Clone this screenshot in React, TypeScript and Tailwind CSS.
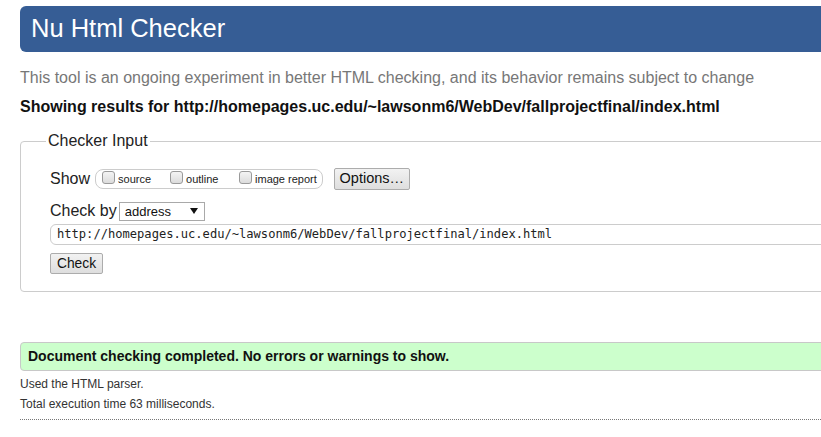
import React from "react";

function Box({ label, w }: { label: string; w: string }) {
  return (
    <div className={`flex items-start shrink-0 ${w}`}>
      <span className="shrink-0 mt-[1px] block w-[13px] h-[13px] rounded-[3px] border border-[#9a9a9a] bg-gradient-to-b from-[#f4f4f4] to-[#dcdcdc]" />
      <span className="ml-[3px] mt-[3px] text-[11px] leading-[13px] text-[#222] whitespace-nowrap">{label}</span>
    </div>
  );
}

export default function App() {
  return (
    <div className="w-full h-[437px] overflow-hidden bg-white font-['Liberation_Sans',Arial,sans-serif] text-[#222]">
      <div className="w-[calc(100%+20px)] pl-[20px] pt-[6px]">
        <div className="h-[46px] bg-[#365d95] rounded-l-[6px] flex items-center pl-[11px]">
          <h1 className="text-white text-[25.5px] leading-none">Nu Html Checker</h1>
        </div>
        <p className="mt-[16px] text-[16px] leading-[20px] text-[#777] whitespace-nowrap">
          This tool is an ongoing experiment in better HTML checking, and its behavior remains subject to change
        </p>
        <p className="mt-[9px] text-[16px] leading-[20px] font-bold text-[#111] whitespace-nowrap">
          Showing results for http://homepages.uc.edu/~lawsonm6/WebDev/fallprojectfinal/index.html
        </p>
        <fieldset className="mt-[14px] border border-[#cccccc] rounded-[4px] pl-[29px] pr-0 pb-[16px]">
          <legend className="-ml-[4px] px-[2px] text-[16px] leading-[20px] text-[#222]">Checker Input</legend>
          <div className="mt-[17px] flex items-center h-[21px]">
            <span className="text-[16px] leading-[20px]">Show</span>
            <div className="ml-[5px] h-[20px] border border-[#cccccc] rounded-[8px] flex items-start pl-[6px] pr-[5px] pt-0">
              <Box label="source" w="w-[68px]" />
              <Box label="outline" w="w-[69px]" />
              <Box label="image report" w="w-auto" />
            </div>
            <button className="ml-[11px] h-[22px] w-[76px] border border-[#acacac] rounded-[2px] bg-gradient-to-b from-[#f2f2f2] to-[#dedede] text-[14.5px] leading-none text-[#111] flex items-center justify-center">
              Options…
            </button>
          </div>
          <div className="mt-[12px] flex items-center h-[20px]">
            <span className="text-[16px] leading-[20px]">Check by</span>
            <div className="ml-[2px] h-[19px] w-[86px] border border-[#a9a9a9] bg-white flex items-center justify-between pl-[5px] pr-[6px]">
              <span className="text-[13px] leading-none text-[#111]">address</span>
              <svg width="8" height="6" viewBox="0 0 8 6">
                <path d="M0 0 L8 0 L4 6 Z" fill="#111" />
              </svg>
            </div>
          </div>
          <div className="mt-[3px] h-[21px] border border-[#cccccc] rounded-l-[6px] pl-[6px] flex items-center font-['DejaVu_Sans_Mono',monospace] text-[12.1px] text-[#222] whitespace-nowrap">
            http://homepages.uc.edu/~lawsonm6/WebDev/fallprojectfinal/index.html
          </div>
          <button className="mt-[8px] h-[21px] w-[53px] border border-[#acacac] rounded-[2px] bg-gradient-to-b from-[#f2f2f2] to-[#dedede] text-[13.8px] leading-none text-[#111]">
            Check
          </button>
        </fieldset>
        <div className="mt-[50px] h-[29px] border border-[#c8c8c8] bg-[#ccffcc] rounded-l-[4px] pl-[7px] flex items-center font-bold text-[14px] text-[#111] whitespace-nowrap">
          Document checking completed. No errors or warnings to show.
        </div>
        <p className="mt-[3px] text-[12px] leading-[20px] text-[#333]">Used the HTML parser.</p>
        <p className="text-[12px] leading-[20px] text-[#333]">Total execution time 63 milliseconds.</p>
        <div className="mt-[5px] border-t border-dotted border-[#777]" />
      </div>
    </div>
  );
}
